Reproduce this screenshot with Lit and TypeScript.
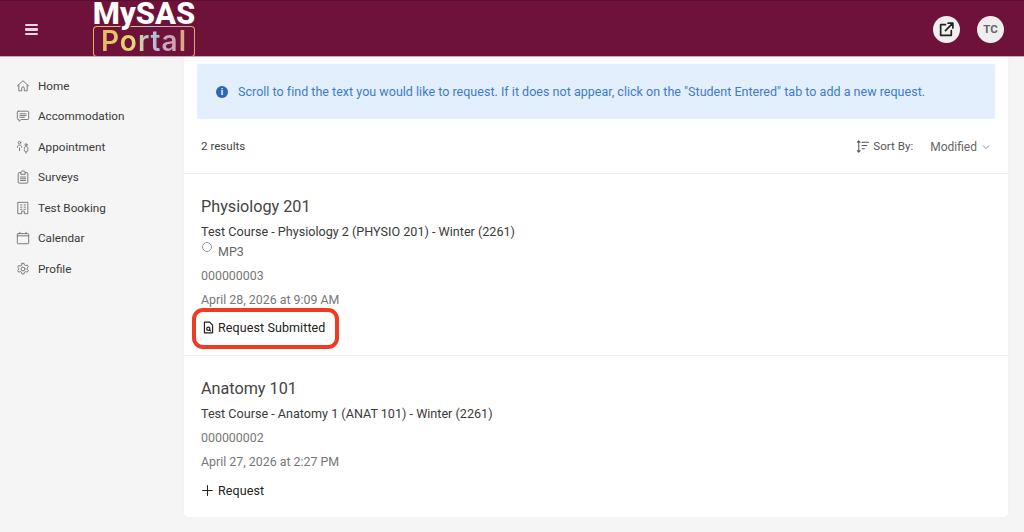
import { LitElement, html, css, svg } from "lit";
import { customElement } from "lit/decorators.js";

const ic = (body: unknown, size = 14, sw = 1.1) => html`<svg width=${size} height=${size} viewBox="0 0 16 16" fill="none" stroke="currentColor" stroke-width=${sw} stroke-linecap="round" stroke-linejoin="round">${body}</svg>`;

const nav: [string, unknown][] = [
  ["Home", svg`<path d="M1.500 8 8 2l6.500 6M3.200 7v6.500h3.300V10.500a1.500 1.500 0 0 1 3 0v3h3.300V7"/>`],
  ["Accommodation", svg`<path d="M2.500 2.500h11a1 1 0 0 1 1 1v7.500a1 1 0 0 1-1 1H6l-2.500 2v-2h-1a1 1 0 0 1-1-1V3.500a1 1 0 0 1 1-1z"/><path d="M4.500 5.500h7M4.500 7.500h7M4.500 9.500h5"/>`],
  ["Appointment", svg`<circle cx="4" cy="3" r="1.400"/><path d="M1.500 8.500c0-1.800 1-2.800 2.500-2.800s2.500 1 2.500 2.800M4 9v3"/><circle cx="11.500" cy="5.500" r="1.200"/><path d="M9.500 9.500c0-1.500.8-2 2-2s2 .5 2 2v2c0 1.500-.8 2-2 2s-2-.5-2-2zM11.500 13.500v1.500"/>`],
  ["Surveys", svg`<path d="M5.500 3H3.500a1 1 0 0 0-1 1v10a1 1 0 0 0 1 1h9a1 1 0 0 0 1-1V4a1 1 0 0 0-1-1h-2"/><path d="M5.500 4.500V3a2.500 2 0 0 1 5 0v1.500zM5 8h6M5 10h6M5 12h6"/>`],
  ["Test Booking", svg`<path d="M2.500 1.500h11v13h-4v-3h-3v3h-4z"/><path d="M5.200 4.500h1.500M9.300 4.500h1.500M5.200 7h1.500M9.300 7h1.500M5.200 9.500h1.500M9.300 9.500h1.500"/>`],
  ["Calendar", svg`<rect x="1.500" y="3" width="13" height="11.500" rx="1"/><path d="M1.500 5.500h13M4.500 1.500V3M11.500 1.500V3"/>`],
  ["Profile", svg`<circle cx="8" cy="8" r="2.200"/><path d="M6.800 1.500h2.400l.4 1.800 1.500.8 1.800-.6 1.200 2-1.400 1.300v1.500l1.400 1.300-1.200 2-1.800-.6-1.500.8-.4 1.800H6.800l-.4-1.800-1.500-.8-1.800.6-1.200-2 1.400-1.300V7.300L1.900 6l1.200-2 1.800.6 1.500-.8z"/>`],
];

@customElement("app-root")
export class AppRoot extends LitElement {
  static styles = css`
    :host { display: block; height: 532px; overflow: hidden; background: #f5f5f5; font-family: Roboto, "Liberation Sans", sans-serif; color: #333; }
    .top { height: 57px; box-sizing: border-box; background: #6f123a; border-top: 1px solid #5c0e30; border-bottom: 1px solid #c9a8b6; display: flex; align-items: center; overflow: hidden; padding: 0 20px 0 25px; }
    .burger { width: 13px; flex: none; display: flex; flex-direction: column; gap: 2px; margin-right: 55px; margin-top: 2px; }
    .burger i { display: block; height: 2.500px; background: #e8d5dd; border-radius: 1px; }
    .logo { width: 102px; flex: none; display: flex; flex-direction: column; align-items: center; margin-top: 0; }
    .my { font: 800 31px/25px Roboto, sans-serif; color: #fff; height: 25px; position: relative; z-index: 1; -webkit-text-stroke: 3px #6f123a; paint-order: stroke fill; }
    .portal { box-sizing: border-box; width: 102px; height: 31px; border: 1.500px solid transparent; border-radius: 4px; text-align: center;
      background: linear-gradient(#6f123a,#6f123a) padding-box, linear-gradient(90deg,#e6b060 0%,#e6c878 35%,#a8c8d8 58%,#c8a4c0 78%,#e0a868 100%) border-box; }
    .portal span { font: 600 28px/28px Inter, Roboto, sans-serif; letter-spacing: 1px; display: inline-block;
      background: linear-gradient(90deg,#e6b860 0%,#e6d878 38%,#a8c8d8 58%,#c8a4c0 78%,#e0a878 100%); -webkit-background-clip: text; background-clip: text; color: transparent; }
    .spacer { flex: 1; }
    .round { width: 27px; height: 27px; border-radius: 50%; background: #f0eeee; display: flex; align-items: center; justify-content: center; color: #222; margin-top: 1px; }
    .ext { margin-right: 17px; }
    .tc { font: 700 11.500px Roboto, sans-serif; color: #666; }
    .body { display: flex; height: 475px; }
    .side { width: 184px; flex: none; padding-top: 13.600px; box-sizing: border-box; }
    .nav { height: 30.500px; display: flex; align-items: center; gap: 8px; padding-left: 16px; font-size: 11.700px; color: #3a3a3a; }
    .nav svg { color: #777; flex: none; }
    .main { width: 824px; height: 460px; background: #fff; border-radius: 0 0 4px 4px; position: relative; box-shadow: 0 0 1px #ddd; }
    .banner { margin: 7px 13px 0; height: 55px; background: #e3effc; border-radius: 2px; display: flex; align-items: center; gap: 10px; padding-left: 18px; color: #3d7bcb; font-size: 12.500px; letter-spacing: .02px; }
    .info { width: 12px; height: 12px; border-radius: 50%; background: #2a66b8; color: #fff; font: 700 9px/12px Roboto, sans-serif; text-align: center; flex: none; margin-left: 1px; }
    .bar { height: 54px; display: flex; align-items: center; padding: 0 17px; font-size: 11.600px; color: #444; border-bottom: 1px solid #eee; }
    .sort { display: flex; align-items: center; color: #555; gap: 3px; margin-left: auto; font-size: 11.600px; }
    .mod { font-size: 12px; color: #666; margin-left: 17px; margin-top: 1px; display: flex; align-items: center; gap: 4px; }
    .row { padding: 0 17px; display: flex; flex-direction: column; position: relative; }
    .r1 { height: 182px; padding-top: 21px; border-bottom: 1px solid #eee; box-sizing: border-box; }
    .r2 { padding-top: 21px; }
    h3 { margin: 0; font: 400 16.200px/24px Roboto, sans-serif; color: #444; }
    .course { font-size: 12.600px; line-height: 18px; margin-top: 4px; color: #3a3a3a; }
    .radio { display: flex; gap: 6px; color: #666; font-size: 12.500px; height: 20px; }
    .radio i { width: 8px; height: 8px; border: 1.500px solid #999; border-radius: 50%; margin: 1px 0 0 1px; }
    .radio span { margin-top: 3px; }
    .meta { font-size: 12.400px; line-height: 24px; color: #777; }
    .gap { margin-top: 3px; }
    .act { display: flex; align-items: center; gap: 3px; font-size: 12.500px; color: #222; height: 20px; letter-spacing: .1px; }
    .act.a1 { margin-top: 5px; margin-left: 1px; }
    .act.a2 { margin-top: 6px; gap: 4px; }
    .mark { position: absolute; left: 8px; top: 134px; width: 147px; height: 41px; box-sizing: border-box; border: 4px solid #ee3b22; border-radius: 11px; }
  `;

  render() {
    return html`
      <div class="top">
        <div class="burger"><i></i><i></i><i></i></div>
        <div class="logo"><div class="my">MySAS</div><div class="portal"><span>Portal</span></div></div>
        <div class="spacer"></div>
        <div class="round ext">${ic(svg`<path d="M7 3.500H2.500v10h10V9"/><path d="M7 9 14 2M9.500 2H14v4.500"/>`, 17, 1.6)}</div>
        <div class="round tc">TC</div>
      </div>
      <div class="body">
        <div class="side">
          ${nav.map(([l, i]) => html`<div class="nav">${ic(i)}<span>${l}</span></div>`)}
        </div>
        <div class="main">
          <div class="banner"><span class="info">i</span><span>Scroll to find the text you would like to request. If it does not appear, click on the "Student Entered" tab to add a new request.</span></div>
          <div class="bar"><span>2 results</span>
            <div class="sort">${ic(svg`<path d="M4 2v12M2.500 3.500 4 2l1.500 1.500M2.500 12.500 4 14l1.500-1.500M7.500 3.500h7M7.500 7h5M7.500 10.500h2.500"/>`, 15)}<span>Sort By:</span></div>
            <div class="mod">Modified ${ic(svg`<path d="m3.500 6 4.500 4.500L12.500 6"/>`, 10, 1.2)}</div>
          </div>
          <div class="row r1">
            <h3>Physiology 201</h3>
            <div class="course">Test Course - Physiology 2 (PHYSIO 201) - Winter (2261)</div>
            <div class="radio"><i></i><span>MP3</span></div>
            <div class="meta gap">000000003</div>
            <div class="meta">April 28, 2026 at 9:09 AM</div>
            <div class="act a1">${ic(svg`<path d="M3 1.500h6.500l3.500 3.500v9.500H3z"/><circle cx="7.800" cy="9.500" r="2"/><path d="m9.300 11 1.200 1.200"/>`, 13, 1.5)}<span>Request Submitted</span></div>
            <div class="mark"></div>
          </div>
          <div class="row r2">
            <h3>Anatomy 101</h3>
            <div class="course">Test Course - Anatomy 1 (ANAT 101) - Winter (2261)</div>
            <div class="meta gap">000000002</div>
            <div class="meta">April 27, 2026 at 2:27 PM</div>
            <div class="act a2">${ic(svg`<path d="M8 2v12M2 8h12"/>`, 13, 1.3)}<span>Request</span></div>
          </div>
        </div>
      </div>
    `;
  }
}
